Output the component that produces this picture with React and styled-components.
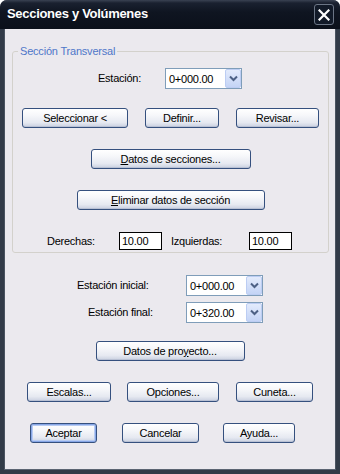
import React from "react";
import styled, { createGlobalStyle } from "styled-components";

const Global = createGlobalStyle`
  html, body { margin: 0; padding: 0; background: #ffffff; }
  body { font-family: "Liberation Sans", Arial, sans-serif; }
  #root { width: 340px; height: 474px; }
  * { box-sizing: border-box; }
`;

const Window = styled.div`
  width: 340px;
  height: 474px;
  display: flex;
  flex-direction: column;
  background: #323b48;
  border-radius: 7px 7px 0 0;
  overflow: hidden;
`;

const TitleBar = styled.div`
  height: 29px;
  flex-shrink: 0;
  display: flex;
  align-items: center;
  justify-content: space-between;
  padding: 0 6px 2px 7px;
  background: linear-gradient(#3a4252 0px, #1a2130 3px, #0f1521 12px, #0b101a 29px);
`;

const Title = styled.span`
  color: #ffffff;
  font-weight: bold;
  font-size: 13px;
  letter-spacing: -0.3px;
`;

const CloseButton = styled.div`
  width: 20px;
  height: 21px;
  margin-top: 2px;
  border: 1px solid #6b7585;
  border-radius: 3px;
  background: #121a28;
  display: flex;
  align-items: center;
  justify-content: center;
`;

const Client = styled.div`
  flex: 1;
  margin: 0 4px 4px;
  background: #ebe9ee;
  display: flex;
  flex-direction: column;
  border-bottom: 1px solid #5b6472;
  border-left: 1px solid #4a5360;
  border-right: 1px solid #4a5360;
`;

const Group = styled.fieldset`
  margin: 15px 6px 0 7px;
  padding: 0 0 2px 0;
  border: 1px solid #d3d1cc;
  border-radius: 3px;
  min-width: 0;
`;

const Legend = styled.legend`
  margin-left: 5px;
  padding: 0 2px;
  font-size: 11px;
  line-height: 14px;
  letter-spacing: -0.2px;
  color: #4f77c9;
`;

const Column = styled.div`
  display: flex;
  flex-direction: column;
`;

const Row = styled.div`
  display: flex;
  align-items: center;
  margin-top: ${(p) => p.$top || 0}px;
  padding-left: ${(p) => p.$left || 0}px;
  gap: ${(p) => p.$gap || 0}px;
  justify-content: ${(p) => (p.$center ? "center" : "flex-start")};
`;

const Label = styled.span`
  font-size: 11px;
  letter-spacing: -0.25px;
  color: #000;
  width: ${(p) => (p.$w ? `${p.$w}px` : "auto")};
  padding-left: ${(p) => p.$indent || 0}px;
  margin-top: ${(p) => (p.$raise ? -p.$raise * 2 : 0)}px;
  flex-shrink: 0;
  white-space: nowrap;
`;

const Button = styled.button`
  width: ${(p) => p.$w}px;
  height: 20px;
  padding: 0;
  margin: 0 0 0 ${(p) => p.$ml || 0}px;
  border: 1px solid #35507e;
  border-radius: 3px;
  background: linear-gradient(#ffffff 0%, #f6f7fa 35%, #e6e9f1 75%, #c9d0e0 100%);
  box-shadow: ${(p) =>
    p.$default
      ? "inset 0 0 0 1px #87a6e6, inset 0 0 0 2px #b7cbf2"
      : "inset 0 -1px 0 #b9c1d4"};
  font-family: "Liberation Sans", Arial, sans-serif;
  font-size: 11px;
  letter-spacing: -0.25px;
  color: #000;
  flex-shrink: 0;
  cursor: default;
`;

const Combo = styled.div`
  width: 77px;
  height: 21px;
  border: 1px solid #7f9db9;
  background: #fff;
  display: flex;
  align-items: center;
  justify-content: space-between;
  flex-shrink: 0;
`;

const ComboValue = styled.span`
  padding-left: 3px;
  font-size: 11px;
  letter-spacing: -0.25px;
  color: #000;
`;

const DropButton = styled.div`
  width: 16px;
  height: 19px;
  border: 1px solid #bccdf3;
  border-radius: 2px;
  background: linear-gradient(#e3ebfc, #c4d4f6);
  display: flex;
  align-items: center;
  justify-content: center;
`;

const TextBox = styled.input`
  width: 43px;
  height: 18px;
  border: 1px solid #000;
  background: #fff;
  padding: 0 2px;
  margin: 0;
  font-family: "Liberation Sans", Arial, sans-serif;
  font-size: 11px;
  letter-spacing: -0.25px;
  color: #000;
  outline: none;
  flex-shrink: 0;
`;

const Chevron = () => (
  <svg width="9" height="7" viewBox="0 0 9 7">
    <path d="M1 1.5 L4.5 5 L8 1.5" fill="none" stroke="#4d6185" strokeWidth="2" />
  </svg>
);

const ComboBox = ({ value }) => (
  <Combo>
    <ComboValue>{value}</ComboValue>
    <DropButton>
      <Chevron />
    </DropButton>
  </Combo>
);

export default function App() {
  return (
    <>
      <Global />
      <Window>
        <TitleBar>
          <Title>Secciones y Volúmenes</Title>
          <CloseButton>
            <svg width="12" height="12" viewBox="0 0 12 12">
              <path d="M1.5 1.5 L10.5 10.5 M10.5 1.5 L1.5 10.5" stroke="#fff" strokeWidth="2.2" strokeLinecap="square" />
            </svg>
          </CloseButton>
        </TitleBar>
        <Client>
          <Group>
            <Legend>Sección Transversal</Legend>
            <Column>
              <Row $top={10} $left={85}>
                <Label $w={67} $raise={1}>Estación:</Label>
                <ComboBox value="0+000.00" />
              </Row>
              <Row $top={19} $left={9} $gap={17}>
                <Button $w={106}>Seleccionar &lt;</Button>
                <Button $w={74}>Definir...</Button>
                <Button $w={83}>Revisar...</Button>
              </Row>
              <Row $top={21} $center>
                <Button $w={160}><u>D</u>atos de secciones...</Button>
              </Row>
              <Row $top={21} $center>
                <Button $w={188}><u>E</u>liminar datos de sección</Button>
              </Row>
              <Row $top={22} $left={34}>
                <Label $w={72}>Derechas:</Label>
                <TextBox readOnly value="10.00" />
                <Label $w={87} $indent={9}>Izquierdas:</Label>
                <TextBox readOnly value="10.00" />
              </Row>
            </Column>
          </Group>
          <Row $top={22} $left={72}>
            <Label $w={109} $raise={1}>Estación inicial:</Label>
            <ComboBox value="0+000.00" />
          </Row>
          <Row $top={6} $left={72}>
            <Label $w={109} $indent={11} $raise={1}>Estación final:</Label>
            <ComboBox value="0+320.00" />
          </Row>
          <Row $top={18} $center>
            <Button $w={149}>Datos de pro<u>y</u>ecto...</Button>
          </Row>
          <Row $top={21} $left={22} $gap={16}>
            <Button $w={84}>Escalas...</Button>
            <Button $w={92}>Opciones...</Button>
            <Button $w={77} $ml={1}>Cuneta...</Button>
          </Row>
          <Row $top={21} $left={25} $gap={25}>
            <Button $w={67} $default>Aceptar</Button>
            <Button $w={77}>Cancelar</Button>
            <Button $w={72} $ml={-1}>Ayuda...</Button>
          </Row>
        </Client>
      </Window>
    </>
  );
}
